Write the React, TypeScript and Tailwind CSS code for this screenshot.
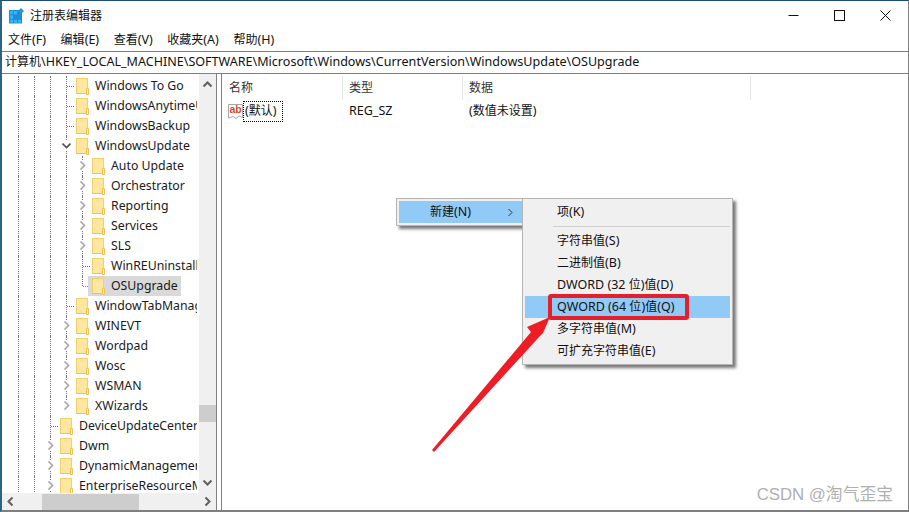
import React from "react";

const FONT = "font-['Noto_Sans','Noto_Sans_CJK_SC',sans-serif]";

interface TreeRow {
  label: string;
  level: number; // 2, 3 or 4
  toggle?: "closed" | "open";
  guides: number[];
  stubEnd?: boolean;
  selected?: boolean;
}

const g2 = [18, 34, 50];
const g3 = [18, 34, 50, 66];
const g4 = [18, 34, 50, 66, 82];

const rows: TreeRow[] = [
  { label: "Windows To Go", level: 3, guides: g3 },
  { label: "WindowsAnytimeUpgrade", level: 3, guides: g3 },
  { label: "WindowsBackup", level: 3, guides: g3 },
  { label: "WindowsUpdate", level: 3, toggle: "open", guides: g3 },
  { label: "Auto Update", level: 4, toggle: "closed", guides: g4 },
  { label: "Orchestrator", level: 4, toggle: "closed", guides: g4 },
  { label: "Reporting", level: 4, toggle: "closed", guides: g4 },
  { label: "Services", level: 4, toggle: "closed", guides: g4 },
  { label: "SLS", level: 4, toggle: "closed", guides: g4 },
  { label: "WinREUninstall", level: 4, guides: g4 },
  { label: "OSUpgrade", level: 4, guides: g4, stubEnd: true, selected: true },
  { label: "WindowTabManager", level: 3, guides: g3 },
  { label: "WINEVT", level: 3, toggle: "closed", guides: g3 },
  { label: "Wordpad", level: 3, toggle: "closed", guides: g3 },
  { label: "Wosc", level: 3, toggle: "closed", guides: g3 },
  { label: "WSMAN", level: 3, toggle: "closed", guides: g3 },
  { label: "XWizards", level: 3, toggle: "closed", guides: g3, stubEnd: true },
  { label: "DeviceUpdateCenter", level: 2, guides: g2 },
  { label: "Dwm", level: 2, toggle: "closed", guides: g2 },
  { label: "DynamicManagement", level: 2, toggle: "closed", guides: g2 },
  { label: "EnterpriseResourceManager", level: 2, toggle: "closed", guides: g2 },
];

// chinese runs are 12px in the shot, latin ones a bit larger
const Mixed = ({ text }: { text: string }) => (
  <>
    {text.split(/([\u4e00-\u9fff]+)/).map((part, i) =>
      i % 2 === 1 ? (
        <span key={i} className="text-[12px]">
          {part}
        </span>
      ) : (
        part
      ),
    )}
  </>
);

const Folder = () => (
  <svg width="13" height="17" viewBox="0 0 13 17" className="shrink-0">
    <rect x="0.5" y="0.5" width="11" height="15" fill="#ffe9a6" stroke="#f3d06c" />
    <rect x="1" y="1" width="10" height="14" fill="#ffe7a0" />
    <path d="M10.5 16.5 V10.5 H12.5 V16.5 Z" fill="#fff3c4" stroke="#eec452" />
    <path d="M0.5 15.5 H10.5" stroke="#eec452" />
  </svg>
);

const Chevron = ({ open }: { open?: boolean }) => (
  <svg width="9" height="9" viewBox="0 0 9 9">
    {open ? (
      <path d="M0.5 2.5 L4.5 6.5 L8.5 2.5" fill="none" stroke="#505050" strokeWidth="1.6" />
    ) : (
      <path d="M2.5 0.5 L6.5 4.5 L2.5 8.5" fill="none" stroke="#a6a6a6" strokeWidth="1.6" />
    )}
  </svg>
);

const ArrowBtn = ({ d }: { d: string }) => (
  <svg width="11" height="11" viewBox="0 0 11 11">
    <path d={d} fill="none" stroke="#606060" strokeWidth="2" />
  </svg>
);

const Row = ({ row }: { row: TreeRow }) => {
  const indent = row.level === 2 ? 60 : row.level === 3 ? 76 : 92;
  const stub = indent - 10;
  return (
    <div className="relative h-5 shrink-0 flex items-center">
      {row.guides.map((x) => (
        <span
          key={x}
          className={`absolute top-0 w-0 border-l border-dotted border-[#777] ${x === stub && row.stubEnd ? "h-2.5" : "h-5"}`}
          style={{ left: x }}
        />
      ))}
      {!row.toggle && (
        <span
          className="absolute top-2.5 h-0 w-[7px] border-t border-dotted border-[#777]"
          style={{ left: stub + 1 }}
        />
      )}
      {row.toggle && (
        <span className="absolute flex top-[5px] bg-white" style={{ left: stub - 4 }}>
          <Chevron open={row.toggle === "open"} />
        </span>
      )}
      <div
        className={`absolute top-0 h-5 flex items-center gap-[6px] pl-1 pr-[3px] ${row.selected ? "bg-[#d9d9d9]" : ""}`}
        style={{ left: indent - 4 }}
      >
        <Folder />
        <span className="text-[12.3px] text-[#1a1a1a] whitespace-nowrap">{row.label}</span>
      </div>
    </div>
  );
};

const MenuItem = ({ label, active }: { label: string; active?: boolean }) => (
  <div className={`h-[22px] flex items-center pl-[32px] text-[12.5px] text-[#111] whitespace-pre ${active ? "bg-[#91c9f7]" : ""}`}>
    <span>
      <Mixed text={label} />
    </span>
  </div>
);

export default function App() {
  return (
    <div className={`${FONT} relative w-[909px] h-[512px] overflow-hidden bg-white flex flex-col border-t border-t-[#1b4c72] border-l-2 border-l-[#2f6480] border-r border-r-[#7f7f7f] border-b-2 border-b-[#7f7f7f]`}>
      {/* title bar */}
      <div className="h-[29px] shrink-0 flex items-center">
        <svg width="15" height="16" viewBox="0 0 15 16" className="ml-[7px] mt-[1px]">
          <rect x="0" y="2" width="13" height="13.5" fill="#1c8fd8" />
          <g fill="#35b5f5">
            <rect x="1" y="3" width="3" height="3.4" />
            <rect x="1" y="7.4" width="3" height="3.4" />
            <rect x="1" y="11.8" width="3" height="3" />
            <rect x="5" y="11.8" width="3" height="3" />
            <rect x="9" y="11.8" width="3" height="3" />
            <rect x="5" y="3" width="3" height="3.4" />
          </g>
          <path d="M12 0 L15 3 L12 6 L9 3 Z" fill="#2a94d4" />
        </svg>
        <span className="ml-[6px] text-[12px] text-[#111]">注册表编辑器</span>
        <div className="ml-auto flex items-center">
          <div className="w-[46px] flex justify-center">
            <svg width="11" height="11" viewBox="0 0 11 11"><path d="M0.5 5.5 H10.5" stroke="#111" /></svg>
          </div>
          <div className="w-[46px] flex justify-center">
            <svg width="11" height="11" viewBox="0 0 11 11"><rect x="0.5" y="0.5" width="10" height="10" fill="none" stroke="#111" /></svg>
          </div>
          <div className="w-[46px] flex justify-center">
            <svg width="11" height="11" viewBox="0 0 11 11"><path d="M0.5 0.5 L10.5 10.5 M10.5 0.5 L0.5 10.5" stroke="#111" /></svg>
          </div>
        </div>
      </div>

      {/* menu bar */}
      <div className="h-[21px] shrink-0 flex items-center gap-[14.6px] pl-[6px] text-[12.5px] text-[#111]">
        <span><Mixed text="文件(F)" /></span>
        <span><Mixed text="编辑(E)" /></span>
        <span><Mixed text="查看(V)" /></span>
        <span><Mixed text="收藏夹(A)" /></span>
        <span><Mixed text="帮助(H)" /></span>
      </div>

      {/* address bar */}
      <div className="h-[23px] shrink-0 border-y border-[#7f7f7f] flex items-center pl-[3px] text-[12.55px] text-[#111] whitespace-nowrap">
        <span><Mixed text="计算机" />\HKEY_LOCAL_MACHINE\SOFTWARE\Microsoft\Windows\CurrentVersion\WindowsUpdate\OSUpgrade</span>
      </div>

      {/* panes */}
      <div className="flex-1 min-h-0 flex">
        {/* tree */}
        <div className="w-[215px] shrink-0 border-r border-[#7f7f7f] flex flex-col min-h-0">
          <div className="flex-1 min-h-0 flex">
            <div className="relative w-[195px] mr-[2px] overflow-hidden flex flex-col pt-[2px]">
              <div className="-ml-[2px] flex flex-col">
                {rows.map((row) => (
                  <Row key={row.label} row={row} />
                ))}
              </div>
            </div>
            <div className="w-[17px] bg-[#f0f0f0] flex flex-col items-center justify-between py-[5px]">
              <ArrowBtn d="M1.5 7.5 L5.5 3.5 L9.5 7.5" />
              <div className="absolute left-[197px] top-[404px] h-[17px] w-[17px] bg-[#cdcdcd]" />
              <ArrowBtn d="M1.5 3.5 L5.5 7.5 L9.5 3.5" />
            </div>
          </div>
          <div className="h-[17px] shrink-0 bg-[#f0f0f0] flex items-center justify-between px-[3px]">
            <ArrowBtn d="M7.5 1.5 L3.5 5.5 L7.5 9.5" />
            <div className="absolute left-[40px] top-[493px] h-[17px] w-[97px] bg-[#cdcdcd]" />
            <ArrowBtn d="M3.5 1.5 L7.5 5.5 L3.5 9.5" />
          </div>
        </div>

        {/* list */}
        <div className="ml-[4px] flex-1 border-l border-[#7f7f7f] flex flex-col text-[12.5px] text-[#111]">
          <div className="h-[24px] mt-[2px] shrink-0 flex text-[12px] text-[#333]">
            <div className="w-[121px] h-full flex items-center pl-[7px] border-r border-[#e5e5e5]">名称</div>
            <div className="w-[120px] h-full flex items-center pl-[6px] border-r border-[#e5e5e5]">类型</div>
            <div className="w-[288px] h-full flex items-center pl-[6px] border-r border-[#e5e5e5]">数据</div>
          </div>
          <div className="h-[22px] shrink-0 flex items-center">
            <div className="w-[121px] flex items-center pl-[6px]">
              <svg width="15" height="17" viewBox="0 0 15 17" className="shrink-0">
                <path d="M0.5 1.5 H14.5 V14.5 L11 13 L8 15.5 L5 13.5 L0.5 15 Z" fill="#fff" stroke="#a8a8a8" />
                <text x="1.5" y="10" fontSize="10.5" fontWeight="700" fill="#d9482b" fontFamily="Liberation Sans">ab</text>
              </svg>
              <span className="h-[21px] flex items-center pl-[2px] pr-[6px] outline-1 -outline-offset-1 outline-dotted outline-black whitespace-nowrap">
                <span><Mixed text="(默认)" /></span>
              </span>
            </div>
            <div className="w-[120px] pl-[6px]">REG_SZ</div>
            <div className="pl-[6px]"><Mixed text="(数值未设置)" /></div>
          </div>
        </div>
      </div>

      {/* context menu */}
      <div className="absolute left-[394px] top-[197px] w-[129px] h-[28px] bg-[#f0f0f0] border border-[#b5b5b5] p-[2px] shadow-[3px_3px_3px_rgba(60,60,60,0.7)]">
        <div className="h-[22px] bg-[#91c9f7] flex items-center pl-[31px] text-[12.5px] text-[#111]">
          <span><Mixed text="新建(N)" /></span>
          <svg width="7" height="9" viewBox="0 0 7 9" className="ml-auto mr-[8px]"><path d="M1.5 1 L5 4.5 L1.5 8" fill="none" stroke="#333" /></svg>
        </div>
      </div>

      {/* submenu */}
      <div className="absolute left-[520px] top-[197px] w-[211px] h-[167px] bg-[#f0f0f0] border border-[#b5b5b5] p-[2px] shadow-[3px_3px_3px_rgba(60,60,60,0.7)]">
        <MenuItem label="项(K)" />
        <div className="h-[7px] flex items-center pl-[28px]">
          <div className="h-px w-full bg-[#d0d0d0]" />
        </div>
        <MenuItem label="字符串值(S)" />
        <MenuItem label="二进制值(B)" />
        <MenuItem label="DWORD (32 位)值(D)" />
        <MenuItem label="QWORD (64 位)值(Q)" active />
        <MenuItem label="多字符串值(M)" />
        <MenuItem label="可扩充字符串值(E)" />
      </div>

      {/* annotation box + arrow */}
      <div className="absolute left-[546px] top-[293px] w-[141px] h-[26px] border-4 border-[#e4202c] rounded-[3px]" />
      <svg width="909" height="512" viewBox="0 0 909 512" className="absolute -left-[2px] -top-px pointer-events-none">
        <path d="M432 450 L434 452 L540 336 L543 333 L550 317 L527 327 L531 332 Z" fill="#ee1c25" />
      </svg>

      {/* watermark */}
      <div className="absolute right-[15px] bottom-[3px] text-[16.8px] text-[#b0b0b0] whitespace-nowrap font-['Liberation_Sans','Noto_Sans_CJK_SC',sans-serif]">
        CSDN @淘气歪宝
      </div>
    </div>
  );
}
